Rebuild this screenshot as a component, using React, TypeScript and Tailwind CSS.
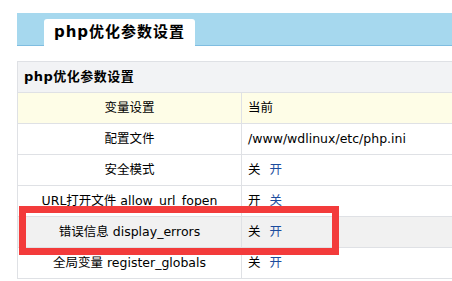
import React from "react";

const Pair = ({ a, b }: { a: string; b: string }) => (
  <span>
    {a}
    <span className="ml-[9px] text-[#1b4c9e]">{b}</span>
  </span>
);

const rows: { label: string; value: React.ReactNode; bg?: string }[] = [
  { label: "变量设置", value: "当前", bg: "bg-[#fefde7]" },
  { label: "配置文件", value: "/www/wdlinux/etc/php.ini" },
  { label: "安全模式", value: <Pair a="关" b="开" /> },
  { label: "URL打开文件 allow_url_fopen", value: <Pair a="开" b="关" /> },
  { label: "错误信息 display_errors", value: <Pair a="关" b="开" />, bg: "bg-[#f1f1f1]" },
  { label: "全局变量 register_globals", value: <Pair a="关" b="开" /> },
];

export default function App() {
  return (
    <div
      className="relative w-[452px] h-[281px] overflow-hidden bg-white text-black"
      style={{ fontFamily: '"DejaVu Sans", "Noto Sans CJK SC", sans-serif' }}
    >
      <div className="pt-[13px] pl-[17px]">
        <div className="h-[33px] bg-[#a6d8ee] border-b border-[#7fbde0] flex items-end pl-[27px]">
          <div className="w-[151px] h-[27px] -mb-px bg-white rounded-t-[3px] flex items-center justify-center text-[15px] font-bold tracking-[1px]">
            php优化参数设置
          </div>
        </div>
        <div className="mt-[15px] border-l border-t border-[#dfe1e5]">
          <div className="h-[31px] bg-[#f2f3f5] border-b border-[#dfe1e5] flex items-center pl-[6px] text-[13px] font-bold tracking-[0.5px]">
            php优化参数设置
          </div>
          {rows.map((r, i) => (
            <div
              key={i}
              className={`h-[31px] flex border-b border-[#dfe1e5] text-[12.5px] ${r.bg ?? ""}`}
            >
              <div className="w-[224px] border-r border-[#dfe1e5] flex items-center justify-center whitespace-nowrap">
                {r.label}
              </div>
              <div className="flex-1 flex items-center pl-[6px] whitespace-nowrap">{r.value}</div>
            </div>
          ))}
        </div>
      </div>
      <div className="absolute left-[19px] top-[206px] w-[320px] h-[49px] border-[7px] border-[#f33b3b]" />
    </div>
  );
}
